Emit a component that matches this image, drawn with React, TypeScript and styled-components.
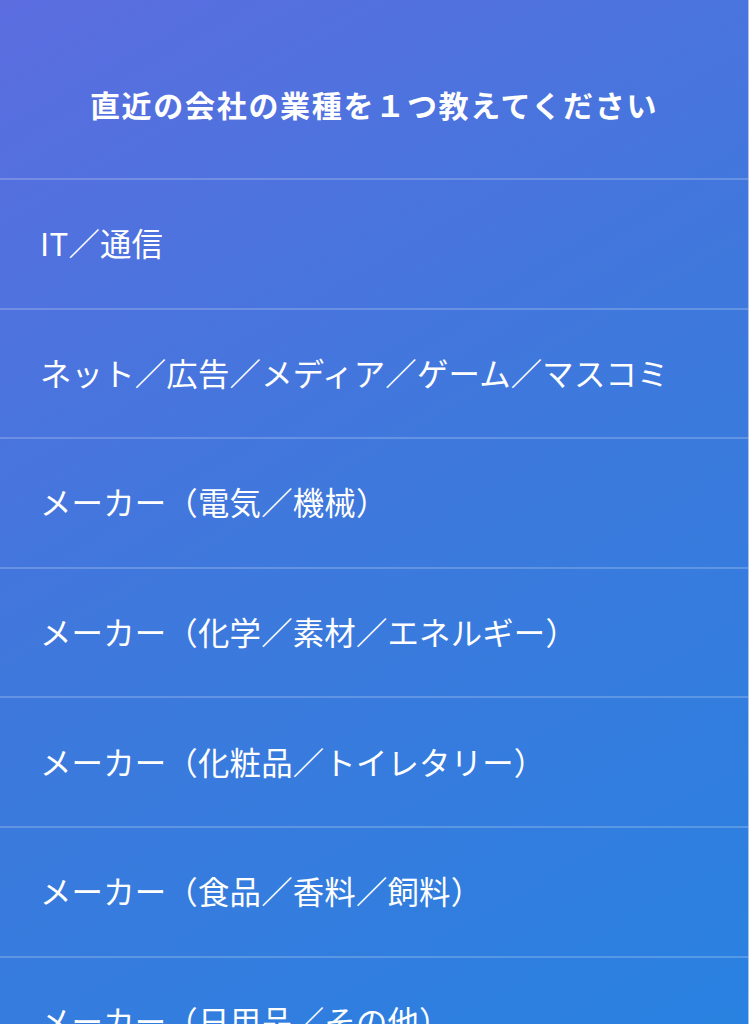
import styled, { createGlobalStyle } from 'styled-components'

const GlobalStyle = createGlobalStyle`
    html, body {
        margin: 0;
        padding: 0;
    }

    body {
        font-family: "Noto Sans CJK JP", "Noto Sans", sans-serif;
        background: #3b78de;
    }
`

const Page = styled.div`
    min-height: 1024px;
    overflow: hidden;
    background: linear-gradient(150deg, #5c6de0 0%, #3f78dc 45%, #2782e1 100%);
    border-right: 1px solid rgba(255, 255, 255, 0.55);
    box-sizing: border-box;
    color: #fff;
`

const Header = styled.header`
    height: 178px;
    display: flex;
    align-items: center;
    justify-content: center;
    box-sizing: border-box;
    padding-top: 30px;
`

const Title = styled.h1`
    margin: 0;
    font-size: 30px;
    font-weight: 700;
    letter-spacing: 1.7px;
`

const List = styled.ul`
    list-style: none;
    margin: 0;
    padding: 0;
`

const Option = styled.li`
    height: 129.6px;
    display: flex;
    align-items: center;
    padding: 0 40px 2px;
    box-sizing: border-box;
    border-top: 2px solid rgba(255, 255, 255, 0.2);
    font-size: 31.4px;
    font-weight: 400;
    letter-spacing: 0.2px;
    white-space: nowrap;
    cursor: pointer;
`

const industries = [
    'IT／通信',
    'ネット／広告／メディア／ゲーム／マスコミ',
    'メーカー（電気／機械）',
    'メーカー（化学／素材／エネルギー）',
    'メーカー（化粧品／トイレタリー）',
    'メーカー（食品／香料／飼料）',
    'メーカー（日用品／その他）',
]

export default function App() {
    return <>
        <GlobalStyle />
        <Page>
            <Header>
                <Title>直近の会社の業種を１つ教えてください</Title>
            </Header>
            <List>
                {industries.map(name => <Option key={name}>{name}</Option>)}
            </List>
        </Page>
    </>
}
